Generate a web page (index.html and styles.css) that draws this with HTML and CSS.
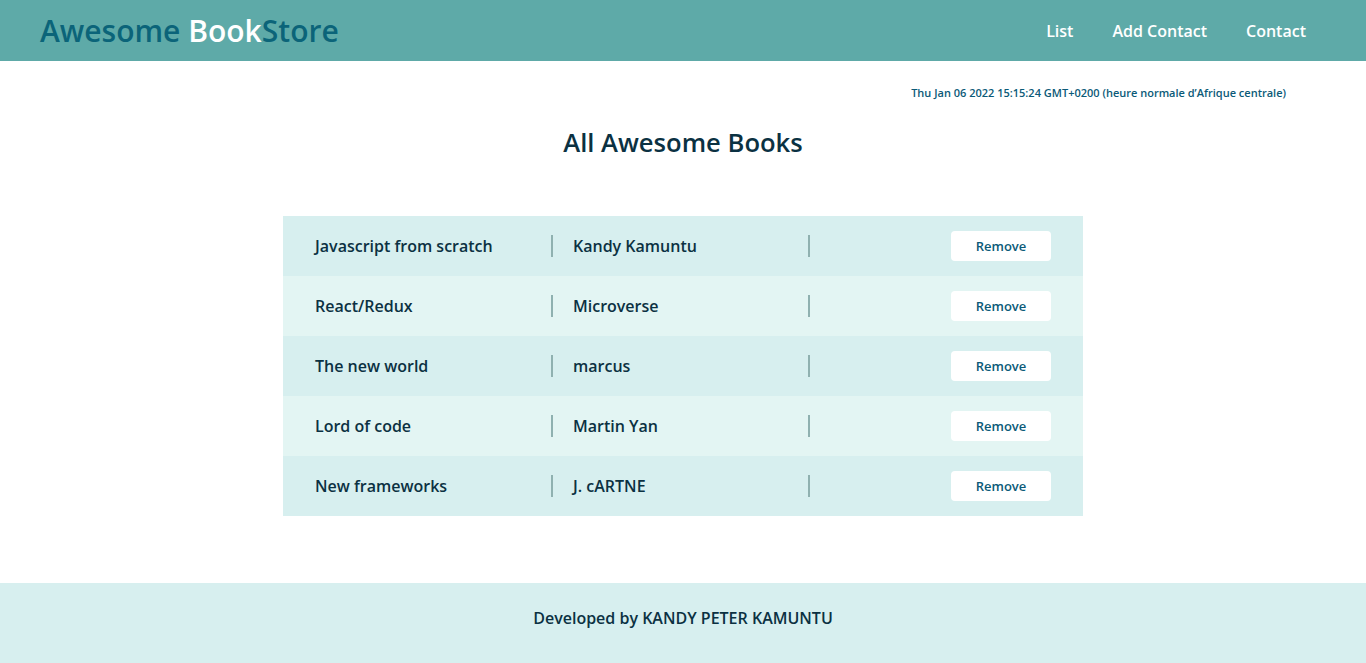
FILE: index.html
```html
<!DOCTYPE html>
<html lang="en">
<head>
<meta charset="utf-8">
<title>Awesome BookStore</title>
<link rel="stylesheet" href="styles.css">
</head>
<body>
<header class="topbar">
  <h1 class="logo">Awesome <span class="logo-accent">Book</span>Store</h1>
  <nav class="nav">
    <a class="nav-link" href="#">List</a>
    <a class="nav-link" href="#">Add Contact</a>
    <a class="nav-link" href="#">Contact</a>
  </nav>
</header>
<main class="main">
  <p class="date">Thu Jan 06 2022 15:15:24 GMT+0200 (heure normale d’Afrique centrale)</p>
  <h2 class="title">All Awesome Books</h2>
  <ul class="books">
    <li class="book"><span class="book-title">Javascript from scratch</span><span class="sep"></span><span class="book-author">Kandy Kamuntu</span><span class="sep"></span><button class="remove">Remove</button></li>
    <li class="book"><span class="book-title">React/Redux</span><span class="sep"></span><span class="book-author">Microverse</span><span class="sep"></span><button class="remove">Remove</button></li>
    <li class="book"><span class="book-title">The new world</span><span class="sep"></span><span class="book-author">marcus</span><span class="sep"></span><button class="remove">Remove</button></li>
    <li class="book"><span class="book-title">Lord of code</span><span class="sep"></span><span class="book-author">Martin Yan</span><span class="sep"></span><button class="remove">Remove</button></li>
    <li class="book"><span class="book-title">New frameworks</span><span class="sep"></span><span class="book-author">J. cARTNE</span><span class="sep"></span><button class="remove">Remove</button></li>
  </ul>
</main>
<footer class="footer">Developed by KANDY PETER KAMUNTU</footer>
</body>
</html>
```
FILE: styles.css
```css
* { box-sizing: border-box; }
html, body { margin: 0; padding: 0; }
body {
  font-family: "Open Sans", "Noto Sans", sans-serif;
  color: #0b3142;
  background: #fff;
}
.topbar {
  height: 61px;
  background: #5eaaa8;
  display: flex;
  align-items: center;
  justify-content: space-between;
  padding: 0 60px 0 40px;
}
.logo {
  margin: 0;
  font-size: 30px;
  font-weight: 600;
  color: #0b6479;
  letter-spacing: 0;
}
.logo-accent { color: #fff; }
.nav { display: flex; gap: 39px; }
.nav-link {
  color: #fff;
  text-decoration: none;
  font-size: 16px;
  font-weight: 600;
}
.main {
  height: 522px;
  padding: 25px 80px 0;
}
.date {
  margin: 0;
  text-align: right;
  font-size: 11px;
  font-weight: 600;
  line-height: 14px;
  color: #0b5a78;
}
.title {
  margin: 25px 0 0;
  text-align: center;
  font-size: 25.6px;
  font-weight: 600;
  color: #0b3142;
}
.books {
  list-style: none;
  width: 800px;
  margin: 56px auto 0;
  padding: 0;
}
.book {
  height: 60px;
  display: flex;
  align-items: center;
  padding: 0 32px;
  background: #d7efef;
  font-size: 16px;
  font-weight: 600;
}
.book:nth-child(even) { background: #e3f5f3; }
.book-title { width: 236px; }
.book-author { width: 255px; padding-left: 20px; }
.sep {
  width: 2px;
  height: 22px;
  background: #8fb1b0;
}
.remove {
  margin-left: auto;
  width: 100px;
  height: 30px;
  border: none;
  border-radius: 4px;
  background: #fff;
  font-family: inherit;
  font-size: 13px;
  font-weight: 600;
  color: #0b5a78;
  cursor: pointer;
}
.footer {
  height: 80px;
  background: #d7efef;
  display: flex;
  align-items: center;
  justify-content: center;
  padding-bottom: 10px;
  font-size: 16px;
  font-weight: 600;
  color: #0b3142;
}
```
